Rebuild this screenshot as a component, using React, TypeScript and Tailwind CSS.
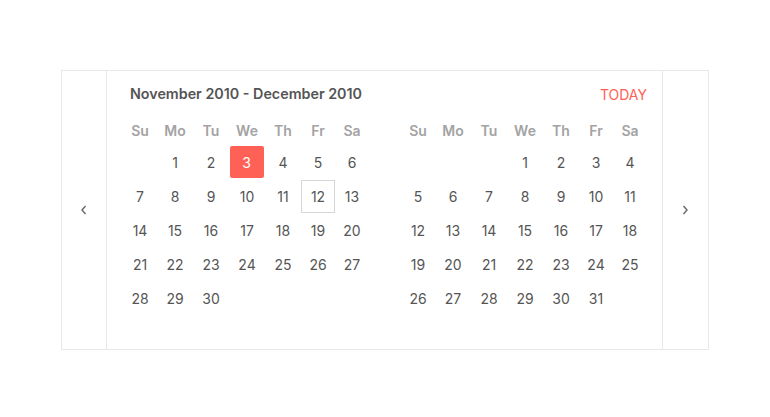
import React from "react";

const WEEK = ["Su", "Mo", "Tu", "We", "Th", "Fr", "Sa"];
const COLS = "grid grid-cols-[34px_36px_36px_36px_36px_34px_34px]";

function Month({ offset, days, selected, today, header }: { offset: number; days: number; selected?: number; today?: number; header: React.ReactNode }) {
  const cells: (number | null)[] = [];
  for (let i = 0; i < offset; i++) cells.push(null);
  for (let d = 1; d <= days; d++) cells.push(d);
  while (cells.length < 42) cells.push(null);
  return (
    <div className="w-[246px] flex flex-col">
      <div className="mt-[12px] h-[22px] flex items-center">{header}</div>
      <div className={`${COLS} mt-[10px] h-[30px] items-center`}>
        {WEEK.map((w) => (
          <div key={w} className="text-center text-[14px] font-semibold text-[#a3a3a3]">{w}</div>
        ))}
      </div>
      <div className={`${COLS} auto-rows-[34px]`}>
        {cells.map((d, i) => (
          <div key={i} className="flex items-center justify-center">
            {d === null ? null : d === selected ? (
              <div className="w-[34px] h-[32px] -ml-[1px] rounded-[2px] bg-[#ff6157] text-white flex items-center justify-center text-[14px]">{d}</div>
            ) : d === today ? (
              <div className="w-[34px] h-[33px] border border-[#d6d6d6] text-[#555] flex items-center justify-center text-[14px]">{d}</div>
            ) : (
              <span className="text-[14px] text-[#555]">{d}</span>
            )}
          </div>
        ))}
      </div>
    </div>
  );
}

export default function App() {
  return (
    <div className="w-[770px] h-[417px] bg-white pt-[70px] flex justify-center" style={{ fontFamily: "Inter, 'Liberation Sans', sans-serif" }}>
      <div className="w-[648px] h-[280px] border border-[#e8e8e8] flex">
        <div className="w-[45px] border-r border-[#e8e8e8] flex items-center justify-center">
          <svg width="8" height="10" viewBox="0 0 8 10" fill="none" stroke="#666" strokeWidth="1.4">
            <path d="M5.5 1 L2 5 L5.5 9" />
          </svg>
        </div>
        <div className="w-[556px] px-[16px] flex gap-[32px] border-r border-[#e8e8e8]">
          <Month
            offset={1}
            days={30}
            selected={3}
            today={12}
            header={<div className="w-full text-center text-[14.3px] font-semibold text-[#555] whitespace-nowrap">November 2010 - December 2010</div>}
          />
          <Month
            offset={3}
            days={31}
            header={<div className="w-full text-right text-[14px] text-[#ff6157]">TODAY</div>}
          />
        </div>
        <div className="w-[44px] flex items-center justify-center">
          <svg width="8" height="10" viewBox="0 0 8 10" fill="none" stroke="#666" strokeWidth="1.4">
            <path d="M2.5 1 L6 5 L2.5 9" />
          </svg>
        </div>
      </div>
    </div>
  );
}
